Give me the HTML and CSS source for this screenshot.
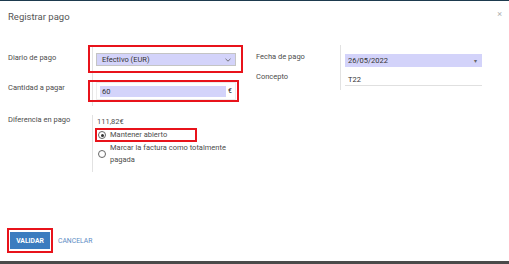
FILE: index.html
```html
<!DOCTYPE html>
<html lang="es">
<head>
    <meta charset="UTF-8">
    <meta name="viewport" content="width=device-width, initial-scale=1.0">
    <title>Registrar pago</title>
    <link rel="stylesheet" href="styles.css">
</head>
<body>
    <div class="topbar"></div>
    <div class="modal">
        <header class="modal-header">
            <h4>Registrar pago</h4>
            <span class="close">×</span>
        </header>

        <main class="modal-body">
            <div class="groups">
                <div class="group group-left">
                    <div class="row row-journal">
                        <label class="label">Diario de pago</label>
                        <div class="field marked mark-journal">
                            <div class="select">
                                <span>Efectivo (EUR)</span>
                                <svg class="chevron" width="6" height="4" viewBox="0 0 6 4"><path d="M0.5 0.8 L3 3.2 L5.5 0.8" fill="none" stroke="#555" stroke-width="0.8"/></svg>
                            </div>
                        </div>
                    </div>
                    <div class="row row-amount">
                        <label class="label">Cantidad a pagar</label>
                        <div class="field marked mark-amount">
                            <div class="monetary">
                                <span class="amount">60</span>
                                <span class="currency">€</span>
                            </div>
                        </div>
                    </div>
                </div>

                <div class="group group-right">
                    <div class="row row-date">
                        <label class="label">Fecha de pago</label>
                        <div class="field">
                            <div class="date">
                                <span>26/05/2022</span>
                                <span class="caret">▾</span>
                            </div>
                        </div>
                    </div>
                    <div class="row row-memo">
                        <label class="label">Concepto</label>
                        <div class="field">
                            <div class="memo">T22</div>
                        </div>
                    </div>
                </div>
            </div>

            <div class="group group-diff">
                <div class="row">
                    <label class="label">Diferencia en pago</label>
                    <div class="field">
                        <div class="difference">111,82€</div>
                        <div class="option marked mark-option">
                            <span class="radio checked"></span>
                            <span>Mantener abierto</span>
                        </div>
                        <div class="option">
                            <span class="radio"></span>
                            <span class="option-text">Marcar la factura como totalmente pagada</span>
                        </div>
                    </div>
                </div>
            </div>
        </main>

        <footer class="modal-footer">
            <button class="btn-primary marked mark-button">VALIDAR</button>
            <a class="btn-link" href="#">CANCELAR</a>
        </footer>
    </div>
    <div class="bottombar"></div>
</body>
</html>
```

FILE: styles.css
```css
body {
    margin: 0;
    padding: 0;
    font-family: Roboto, "Liberation Sans", sans-serif;
    font-size: 7.5px;
    color: #4c4c4c;
    background-color: #fff;
    height: 100vh;
    display: flex;
    flex-direction: column;
    overflow: hidden;
}

.topbar {
    height: 1px;
    background-color: #1d3a4e;
}

.bottombar {
    height: 3px;
    background-color: #4a4a4a;
}

.modal {
    flex: 1;
    display: flex;
    flex-direction: column;
}

.modal-header {
    height: 32px;
    display: flex;
    justify-content: space-between;
    align-items: center;
    padding: 0 7px 0 8px;
}

.modal-header h4 {
    margin: 0;
    font-size: 9.5px;
    font-weight: normal;
    color: #555;
    margin-top: -1px;
}

.close {
    color: #b0b0b0;
    font-size: 9px;
    margin-top: -6px;
}

.modal-body {
    flex: 1;
    padding: 12px 8px 0 8px;
}

.groups {
    display: flex;
    gap: 13px;
}

.group-left {
    width: 235px;
}

.group-right {
    width: 227px;
}

.row {
    display: grid;
    grid-template-columns: 85px 1fr;
}

.label {
    border-right: 1px solid #e2e2e2;
    line-height: 10px;
}

.field {
    padding-left: 3px;
    position: relative;
}

/* filas del grupo izquierdo */
.row-journal {
    height: 30px;
}

.row-journal .label {
    padding-top: 8px;
}

.row-amount {
    height: 31px;
}

.row-amount .label {
    padding-top: 8px;
}

.select {
    margin-top: 8px;
    width: 140px;
    height: 13px;
    box-sizing: border-box;
    border: 1px solid #c4c4c4;
    background-color: #d3d3fa;
    color: #333;
    display: flex;
    justify-content: space-between;
    align-items: center;
    padding: 0 4px 0 5px;
}

.monetary {
    margin-top: 7px;
    width: 140px;
    height: 18px;
    box-sizing: border-box;
    border: 1px solid #ececec;
    display: flex;
    align-items: center;
    padding-left: 3px;
}

.amount {
    width: 126px;
    height: 11px;
    line-height: 11px;
    background-color: #d3d3fa;
    color: #333;
    padding-left: 2px;
    box-sizing: border-box;
}

.currency {
    margin-left: 2px;
    color: #222;
    font-size: 7px;
}

/* filas del grupo derecho */
.group-right .field {
    padding-left: 4px;
}

.row-date {
    height: 24px;
}

.row-date .label {
    padding-top: 7px;
}

.row-memo {
    height: 21px;
}

.row-memo .label {
    padding-top: 3px;
}

.date {
    margin-top: 9px;
    width: 137px;
    height: 13px;
    background-color: #d3d3fa;
    color: #333;
    display: flex;
    justify-content: space-between;
    align-items: center;
    padding: 0 5px 0 3px;
    box-sizing: border-box;
}

.caret {
    font-size: 6px;
    color: #666;
}

.memo {
    width: 137px;
    margin-top: 4px;
    height: 13px;
    line-height: 13px;
    border-bottom: 1px solid #e0e0e0;
    padding-left: 3px;
    box-sizing: border-box;
    color: #333;
}

/* diferencia */
.group-diff {
    margin-top: 9px;
    width: 235px;
}

.group-diff .row {
    height: 57px;
}

.group-diff .field {
    padding-left: 4px;
}

.difference {
    line-height: 12px;
    margin-top: 1px;
}

.option {
    display: flex;
    align-items: center;
    gap: 4px;
    line-height: 12px;
    margin-top: 1px;
    padding-left: 1px;
}

.option-text {
    width: 122px;
}

.radio {
    width: 6px;
    height: 6px;
    border: 1px solid #666;
    border-radius: 50%;
    flex-shrink: 0;
    box-sizing: content-box;
    position: relative;
}

.radio.checked::after {
    content: "";
    position: absolute;
    top: 1.5px;
    left: 1.5px;
    width: 3px;
    height: 3px;
    border-radius: 50%;
    background-color: #333;
}

/* pie */
.modal-footer {
    display: flex;
    align-items: center;
    padding: 0 0 12px 10px;
    gap: 8px;
}

.btn-primary {
    width: 40px;
    height: 17px;
    border: none;
    padding: 0;
    background-color: #3b7cbf;
    color: #fff;
    font-family: Roboto, "Liberation Sans", sans-serif;
    font-size: 6.8px;
    font-weight: bold;
}

.btn-link {
    color: #5d8cc4;
    text-decoration: none;
    font-size: 6.8px;
}

/* recuadros rojos de anotación */
.marked {
    position: relative;
}

.marked::after {
    content: "";
    position: absolute;
    border: 2px solid #e8131b;
    pointer-events: none;
}

.mark-journal::after {
    left: -5px;
    right: 0;
    top: 0;
    bottom: 2px;
}

.mark-amount::after {
    left: -5px;
    right: 4px;
    top: 5px;
    bottom: 4px;
}

.mark-option::after {
    left: -2px;
    width: 98px;
    top: -1px;
    bottom: -1px;
}

.mark-button::after {
    left: -3px;
    right: -3px;
    top: -4px;
    bottom: -4px;
}
```
